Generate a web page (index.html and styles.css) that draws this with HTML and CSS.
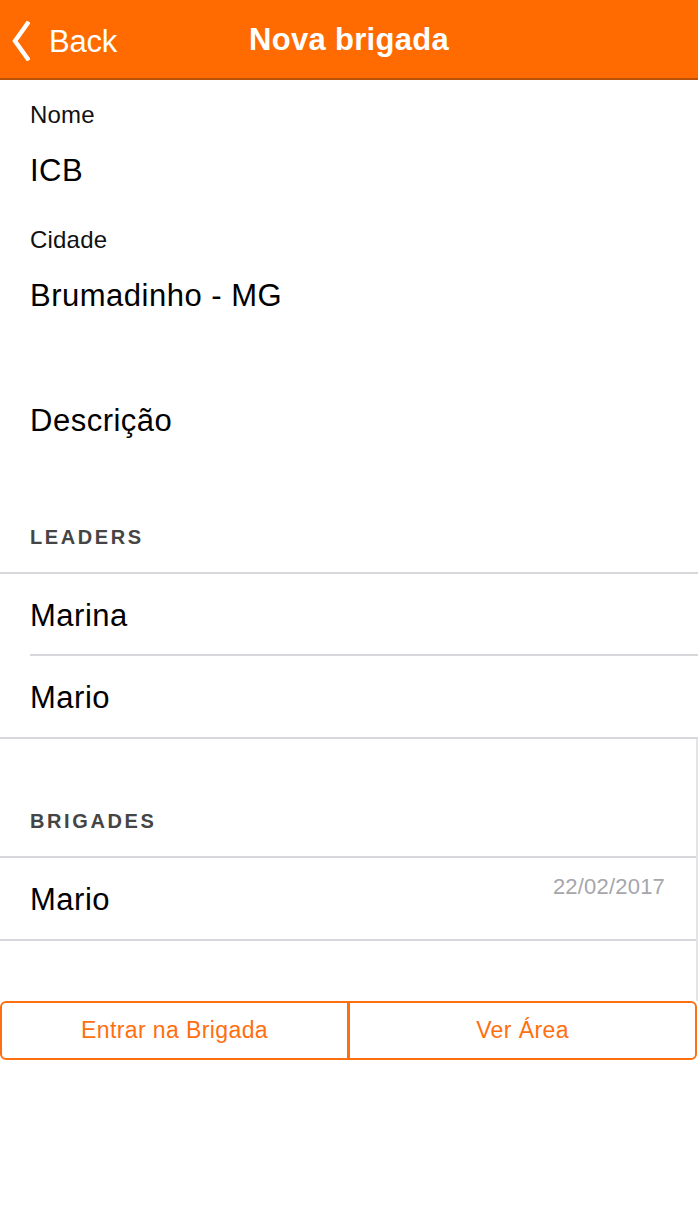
FILE: index.html
```html
<!DOCTYPE html>
<html lang="pt">
<head>
<meta charset="utf-8">
<title>Nova brigada</title>
<link rel="stylesheet" href="styles.css">
</head>
<body>
<div class="screen">
  <header class="navbar">
    <a class="back">
      <svg class="chev" width="18" height="40" viewBox="0 0 18 40"><polyline points="15.5,2.5 3,20 15.5,37.5" fill="none" stroke="#fff" stroke-width="4.4" stroke-linecap="square"/></svg>
      <span class="back-text">Back</span>
    </a>
    <h1 class="title">Nova brigada</h1>
  </header>

  <section class="form">
    <div class="label label-first">Nome</div>
    <div class="value value-first">ICB</div>
    <div class="label label-second">Cidade</div>
    <div class="value value-first">Brumadinho - MG</div>
    <div class="value value-desc">Descrição</div>
  </section>

  <div class="section-head head-leaders">LEADERS</div>
  <ul class="list">
    <li class="row"><span class="name">Marina</span></li>
    <li class="row"><span class="name">Mario</span></li>
  </ul>

  <div class="lower">
    <div class="section-head head-brigades">BRIGADES</div>
    <ul class="list">
      <li class="row row-split"><span class="name">Mario</span><span class="date">22/02/2017</span></li>
    </ul>
    <div class="spacer"></div>
  </div>

  <div class="actions">
    <button class="btn btn-left">Entrar na Brigada</button>
    <button class="btn btn-right">Ver Área</button>
  </div>
</div>
</body>
</html>
```

FILE: styles.css
```css
* { box-sizing: border-box; }
html, body { margin: 0; padding: 0; background: #fff; }
body {
  font-family: "Liberation Sans", Arial, Helvetica, sans-serif;
  color: #000;
  width: 698px;
  height: 1230px;
  overflow: hidden;
}
.screen { width: 698px; }

.navbar {
  position: relative;
  height: 80px;
  background: #ff6b00;
  border-bottom: 2px solid #b9520a;
  display: flex;
  align-items: center;
  justify-content: center;
}
.back {
  position: absolute;
  left: 12px;
  top: 19px;
  display: flex;
  align-items: center;
  color: #fff;
}
.chev { display: block; }
.back-text {
  font-size: 31px;
  line-height: 40px;
  margin-left: 19px;
  margin-top: 3px;
  letter-spacing: -0.2px;
}
.title {
  margin: 0;
  color: #fff;
  font-size: 31px;
  font-weight: bold;
  line-height: 36px;
  margin-top: 1px;
  margin-left: 0;
  letter-spacing: 0.3px;
}

.form { padding-left: 30px; padding-top: 21px; }
.label { font-size: 24px; line-height: 28px; color: #111; letter-spacing: 0.2px; }
.label-second { margin-top: 37px; }
.value { font-size: 31px; line-height: 36px; letter-spacing: 0.5px; }
.value-first { margin-top: 24px; }
.value-desc { margin-top: 89px; }

.section-head {
  padding-left: 30px;
  font-size: 20px;
  line-height: 20px;
  font-weight: bold;
  letter-spacing: 2.6px;
  color: #454545;
  padding-bottom: 25px;
  border-bottom: 2px solid #d8d8dc;
}
.head-leaders { margin-top: 88px; }
.head-brigades { padding-top: 72px; }

.list { list-style: none; margin: 0; padding: 0 0 0 30px; border-bottom: 2px solid #d8d8dc; }
.row {
  height: 82px;
  padding-top: 24px;
  font-size: 31px;
  line-height: 36px;
  letter-spacing: 0.5px;
  border-bottom: 2px solid #d8d8dc;
}
.row:last-child { border-bottom: none; height: 81px; }
.row-split { display: flex; justify-content: space-between; align-items: flex-start; padding-right: 31px; padding-top: 0; }
.row-split .name { padding-top: 24px; }
.date {
  font-size: 22px;
  line-height: 26px;
  color: #a6a6ac;
  padding-top: 16px;
  letter-spacing: 0.2px;
}

.lower { border-right: 2px solid #e4e4e6; }
.spacer { height: 60px; }

.actions {
  display: flex;
  width: 698px;
  padding-right: 1px;
}
.btn {
  flex: 1 1 0;
  height: 59px;
  background: #fff;
  border: 2px solid #ff6f0f;
  color: #ff6f0f;
  font-family: "Liberation Sans", Arial, sans-serif;
  font-size: 23px;
  letter-spacing: 0.4px;
  padding: 0;
  margin: 0;
}
.btn-left { border-radius: 6px 0 0 6px; }
.btn-right { border-radius: 0 6px 6px 0; border-left-width: 1px; }
```
